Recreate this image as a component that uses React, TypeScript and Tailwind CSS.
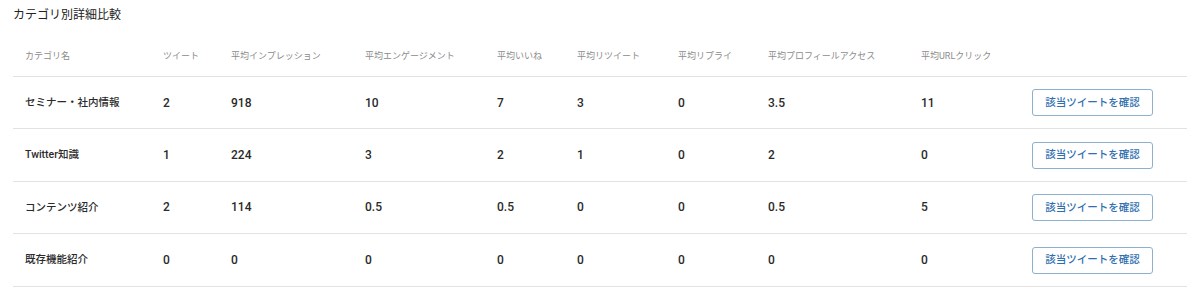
import React from 'react';

const font = { fontFamily: 'Roboto, "Noto Sans CJK JP", sans-serif' };

interface CategoryRow {
  name: string;
  tweets: string;
  impressions: string;
  engagement: string;
  likes: string;
  retweets: string;
  replies: string;
  profile: string;
  urlClicks: string;
}

const rows: CategoryRow[] = [
  { name: 'セミナー・社内情報', tweets: '2', impressions: '918', engagement: '10', likes: '7', retweets: '3', replies: '0', profile: '3.5', urlClicks: '11' },
  { name: 'Twitter知識', tweets: '1', impressions: '224', engagement: '3', likes: '2', retweets: '1', replies: '0', profile: '2', urlClicks: '0' },
  { name: 'コンテンツ紹介', tweets: '2', impressions: '114', engagement: '0.5', likes: '0.5', retweets: '0', replies: '0', profile: '0.5', urlClicks: '5' },
  { name: '既存機能紹介', tweets: '0', impressions: '0', engagement: '0', likes: '0', retweets: '0', replies: '0', profile: '0', urlClicks: '0' },
];

const headers = [
  'カテゴリ名',
  'ツイート',
  '平均インプレッション',
  '平均エンゲージメント',
  '平均いいね',
  '平均リツイート',
  '平均リプライ',
  '平均プロフィールアクセス',
  '平均URLクリック',
  '',
];

const gridCols = 'grid grid-cols-[138px_68px_134px_132px_80px_101px_90px_153px_111px_167px]';

export default function App() {
  return (
    <div className="bg-white w-[1194px] h-[300px] px-[13px] pt-[6px] text-[#333]" style={font}>
      <h2 className="text-[12px] leading-[18px] font-normal text-[#222]">カテゴリ別詳細比較</h2>

      <div className="mt-[14px] w-[1174px]">
        <div className={`${gridCols} h-[39px] items-center border-b border-[#e2e2e2]`}>
          {headers.map((h, i) => (
            <div key={i} className="pl-[12px] text-[9px] text-[#8c8c8c] whitespace-nowrap">
              {h}
            </div>
          ))}
        </div>

        {rows.map((r) => (
          <div key={r.name} className={`${gridCols} h-[52.4px] items-center border-b border-[#e2e2e2]`}>
            <div className="pl-[12px] text-[10.5px] font-medium text-[#2a2a2a] whitespace-nowrap">{r.name}</div>
            {[r.tweets, r.impressions, r.engagement, r.likes, r.retweets, r.replies, r.profile, r.urlClicks].map((v, i) => (
              <div key={i} className="pl-[12px] text-[12px] font-medium text-[#2a2a2a]">
                {v}
              </div>
            ))}
            <div className="pl-[12px]">
              <button className="w-[121px] h-[27px] rounded-[3px] border border-[#8db0cf] bg-white text-[10.5px] font-medium text-[#2f6eaf] whitespace-nowrap">
                該当ツイートを確認
              </button>
            </div>
          </div>
        ))}
      </div>
    </div>
  );
}
